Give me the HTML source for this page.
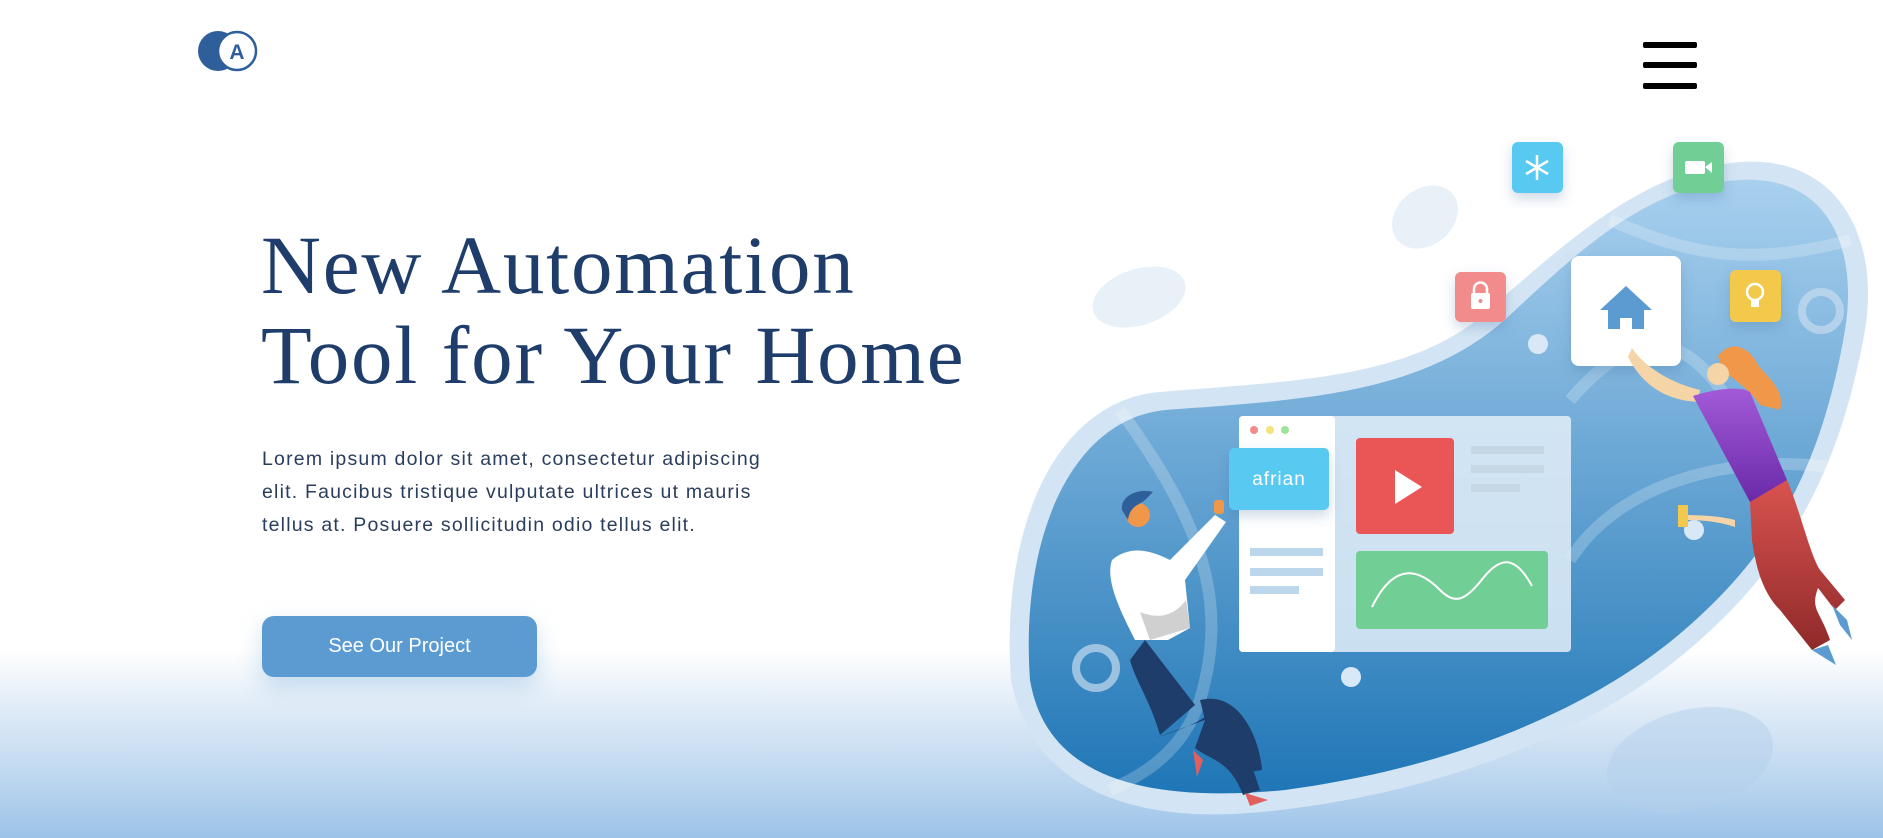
<!DOCTYPE html>
<html><head><meta charset="utf-8"><style>
*{margin:0;padding:0;box-sizing:border-box}
body{width:1883px;height:838px;overflow:hidden;position:relative;background:linear-gradient(to bottom,#fff 0,#fff 650px,#e4eef8 700px,#bcd6ef 780px,#9cc3e8 838px);font-family:"Liberation Sans",sans-serif}
h1{position:absolute;left:261px;top:220px;font-family:"Liberation Serif",serif;font-weight:normal;font-size:83px;line-height:90px;letter-spacing:1.8px;color:#1f3d6b;white-space:nowrap}
p{position:absolute;left:262px;top:443px;width:532px;font-size:19.5px;line-height:33px;letter-spacing:1.2px;color:#2b3d5c}
.btn{position:absolute;left:262px;top:616px;width:275px;height:61px;border-radius:12px;background:#5b9bd1;color:#fff;font-size:20px;text-align:center;line-height:61px;box-shadow:0 10px 24px rgba(91,155,209,.3)}
.ham{position:absolute;left:1643px;width:54px;height:6px;background:#000;border-radius:2px}
svg{position:absolute;left:0;top:0}
</style></head><body>
<svg width="1883" height="838" viewBox="0 0 1883 838">
<defs>
<linearGradient id="bg" x1="0" y1="0" x2="0" y2="1"><stop offset="0" stop-color="#a9d0ee"/><stop offset="1" stop-color="#1f76b6"/></linearGradient>
<linearGradient id="pur" x1="0" y1="0" x2="0" y2="1"><stop offset="0" stop-color="#a25ad8"/><stop offset="1" stop-color="#6a2aa8"/></linearGradient>
<linearGradient id="red" x1="0" y1="0" x2="0" y2="1"><stop offset="0" stop-color="#d9534f"/><stop offset="1" stop-color="#8f2a2a"/></linearGradient>
<filter id="sh" x="-30%" y="-30%" width="160%" height="160%"><feDropShadow dx="0" dy="6" stdDeviation="6" flood-color="#3a6a9a" flood-opacity=".25"/></filter>
</defs>
<circle cx="218" cy="51" r="20" fill="#2f5f9a"/>
<circle cx="237" cy="51" r="19" fill="#fff" stroke="#2f5f9a" stroke-width="2.5"/>
<text x="237" y="59" font-family="Liberation Sans" font-weight="bold" font-size="21" fill="#2f5f9a" text-anchor="middle">A</text>
<ellipse cx="1139" cy="297" rx="48" ry="28" fill="#e8f0f8" transform="rotate(-18 1139 297)"/>
<ellipse cx="1425" cy="217" rx="36" ry="28" fill="#e8f0f8" transform="rotate(-40 1425 217)"/>
<ellipse cx="1690" cy="760" rx="85" ry="50" fill="#b3d0ec" opacity=".5" transform="rotate(-15 1690 760)"/>
<path d="M1011 680 C1000 520 1060 400 1160 392 C1300 380 1420 380 1500 300 C1580 230 1650 170 1740 162 C1840 155 1880 240 1865 330 C1840 470 1790 560 1700 640 C1600 730 1450 790 1280 810 C1120 830 1030 780 1011 680 Z" fill="#d3e5f4"/>
<path d="M1030 680 C1020 540 1070 420 1165 410 C1300 400 1425 395 1510 315 C1585 245 1650 185 1740 180 C1830 175 1858 250 1845 330 C1822 465 1775 550 1690 625 C1595 710 1450 768 1285 790 C1130 805 1045 770 1030 680 Z" fill="url(#bg)"/>
<g fill="none" stroke="#fff" stroke-opacity=".22" stroke-width="12">
<path d="M1120 410 C1200 520 1230 600 1200 700 C1180 760 1130 780 1110 790"/>
<path d="M1610 220 C1680 250 1740 270 1850 240"/>
<path d="M1570 400 C1640 320 1690 330 1740 420 C1780 500 1790 560 1800 620"/>
<path d="M1570 560 C1620 480 1740 450 1850 470"/>
</g>
<circle cx="1096" cy="668" r="20" fill="none" stroke="#c6dcf0" stroke-opacity=".7" stroke-width="8"/>
<circle cx="1821" cy="311" r="19" fill="none" stroke="#c6dcf0" stroke-opacity=".7" stroke-width="8"/>
<circle cx="1538" cy="344" r="10" fill="#d8e8f6"/>
<circle cx="1694" cy="530" r="10" fill="#d8e8f6"/>
<circle cx="1351" cy="677" r="10" fill="#d8e8f6"/>
<rect x="1239" y="416" width="332" height="236" rx="4" fill="#e3eef8" opacity=".85"/>
<rect x="1239" y="416" width="96" height="236" rx="4" fill="#fff"/>
<circle cx="1254" cy="430" r="4" fill="#f28b8b"/><circle cx="1270" cy="430" r="4" fill="#f5e27a"/><circle cx="1285" cy="430" r="4" fill="#9ee39a"/>
<rect x="1250" y="548" width="73" height="8" fill="#bcd6ec"/><rect x="1250" y="568" width="73" height="8" fill="#bcd6ec"/><rect x="1250" y="586" width="49" height="8" fill="#bcd6ec"/>
<rect x="1356" y="438" width="98" height="96" rx="4" fill="#ea5555"/>
<path d="M1395 470 L1422 487 L1395 504 Z" fill="#fff"/>
<rect x="1471" y="446" width="73" height="8" fill="#c5d6e4"/><rect x="1471" y="465" width="73" height="8" fill="#c5d6e4"/><rect x="1471" y="484" width="49" height="8" fill="#c5d6e4"/>
<rect x="1356" y="551" width="192" height="78" rx="4" fill="#71cf95"/>
<path d="M1372 607 C1395 560 1420 570 1440 590 C1455 605 1465 600 1480 582 C1500 555 1515 555 1532 586" fill="none" stroke="#fff" stroke-width="2"/>
<rect x="1229" y="448" width="100" height="62" rx="5" fill="#58c9f1" filter="url(#sh)"/>
<text x="1279" y="485" font-family="Liberation Sans" font-size="19" fill="#fff" text-anchor="middle" letter-spacing="1">afrian</text>
<rect x="1571" y="256" width="110" height="110" rx="8" fill="#fff" filter="url(#sh)"/>
<path d="M1626 286 L1652 310 L1644 310 L1644 329 L1632 329 L1632 318 L1620 318 L1620 329 L1608 329 L1608 310 L1600 310 Z" fill="#5b9bd1"/>
<rect x="1455" y="272" width="51" height="50" rx="6" fill="#f28b8b" filter="url(#sh)"/>
<rect x="1471" y="293" width="19" height="16" rx="2" fill="#fff"/><path d="M1474 294 v-5 a6.5 6.5 0 0 1 13 0 v5" fill="none" stroke="#fff" stroke-width="2.5"/><circle cx="1480.5" cy="301" r="2" fill="#f28b8b"/>
<rect x="1730" y="270" width="51" height="52" rx="6" fill="#f2c94c" filter="url(#sh)"/>
<circle cx="1755" cy="292" r="8" fill="none" stroke="#fff" stroke-width="2.5"/><rect x="1751" y="300" width="8" height="7" fill="#fff"/>
<rect x="1512" y="142" width="51" height="51" rx="6" fill="#58c9f1" filter="url(#sh)"/>
<g stroke="#fff" stroke-width="2.5"><line x1="1537" y1="155" x2="1537" y2="180"/><line x1="1526" y1="161" x2="1548" y2="174"/><line x1="1526" y1="174" x2="1548" y2="161"/></g>
<rect x="1673" y="142" width="51" height="51" rx="6" fill="#71cf95" filter="url(#sh)"/>
<rect x="1685" y="161" width="20" height="13" rx="2" fill="#fff"/><path d="M1705 167 L1712 162 L1712 173 Z" fill="#fff"/>
<path d="M1155 738 C1180 730 1210 720 1215 705 L1250 760 L1260 790 L1243 795 C1230 760 1210 760 1195 748 L1205 720 Z" fill="#1f3d6b"/>
<path d="M1200 700 C1240 690 1260 740 1262 770 L1250 772 C1240 740 1220 725 1205 720 Z" fill="#1f3d6b"/>
<path d="M1145 640 L1195 705 L1160 735 C1150 700 1135 680 1130 660 Z" fill="#1f3d6b"/>
<path d="M1112 560 C1130 545 1150 550 1170 560 L1215 515 L1226 522 L1185 580 L1190 628 L1168 640 L1135 640 C1120 610 1105 580 1112 560 Z" fill="#fff"/>
<path d="M1140 612 C1160 620 1175 615 1186 600 L1190 628 L1150 640 Z" fill="#d0d0d0"/>
<circle cx="1138" cy="515" r="12" fill="#f0974a"/>
<path d="M1122 510 C1120 495 1140 488 1153 492 L1145 500 C1140 505 1130 505 1128 520 Z" fill="#2f5f9a"/>
<rect x="1214" y="500" width="10" height="14" rx="3" fill="#f0974a"/>
<path d="M1193 750 L1203 760 L1197 777 Z" fill="#e06060"/>
<path d="M1245 793 L1268 800 L1250 806 Z" fill="#e06060"/>
<path d="M1632 348 C1640 360 1660 380 1700 390 L1698 402 C1660 400 1640 380 1628 357 Z" fill="#f5d4a8"/>
<path d="M1683 520 C1705 520 1720 522 1735 527 L1735 520 C1720 516 1700 515 1683 515 Z" fill="#f5d4a8"/>
<rect x="1678" y="505" width="10" height="22" fill="#f2c94c"/>
<path d="M1718 356 C1730 340 1748 345 1758 365 C1770 380 1785 390 1780 410 L1760 405 C1750 390 1735 380 1722 370 Z" fill="#f0974a"/>
<circle cx="1718" cy="374" r="11" fill="#f5d4a8"/>
<path d="M1693 396 C1710 390 1740 385 1750 392 L1787 480 C1775 492 1760 500 1750 502 Z" fill="url(#pur)"/>
<path d="M1750 502 L1787 480 C1800 510 1810 555 1820 570 L1845 600 L1835 610 L1818 588 C1810 610 1820 610 1830 640 L1812 650 L1780 610 C1760 590 1755 560 1752 540 Z" fill="url(#red)"/>
<path d="M1832 605 L1847 620 L1852 640 L1840 625 Z" fill="#5b9bd1"/>
<path d="M1812 650 L1828 645 L1836 665 Z" fill="#5b9bd1"/>
</svg>
<h1>New Automation<br>Tool for Your Home</h1>
<p>Lorem ipsum dolor sit amet, consectetur adipiscing elit. Faucibus tristique vulputate ultrices ut mauris tellus at. Posuere sollicitudin odio tellus elit.</p>
<div class="btn">See Our Project</div>
<div class="ham" style="top:42px"></div>
<div class="ham" style="top:62px"></div>
<div class="ham" style="top:83px"></div>
</body></html>
